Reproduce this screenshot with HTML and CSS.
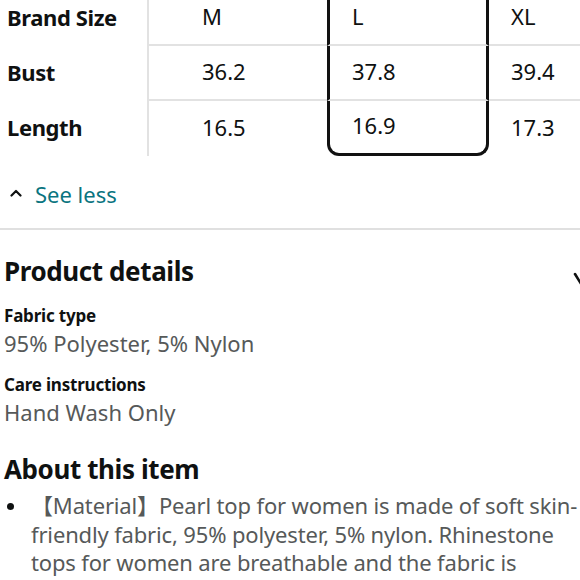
FILE: index.html
```html
<!DOCTYPE html>
<html lang="en">
<head>
<meta charset="utf-8">
<title>Size chart and product details</title>
<link rel="stylesheet" href="styles.css">
</head>
<body>
<div class="page">
  <div class="size-table">
    <div class="label">Brand Size</div>
    <div class="cell col-m line">M</div>
    <div class="cell sel line">L</div>
    <div class="cell col-xl line">XL</div>

    <div class="label">Bust</div>
    <div class="cell col-m line">36.2</div>
    <div class="cell sel line">37.8</div>
    <div class="cell col-xl line">39.4</div>

    <div class="label">Length</div>
    <div class="cell col-m">16.5</div>
    <div class="cell sel sel-last">16.9</div>
    <div class="cell col-xl">17.3</div>
  </div>

  <div class="see-less">
    <svg class="caret" width="12" height="8" viewBox="0 0 12 8" aria-hidden="true">
      <polyline points="1.5,6.5 6,2 10.5,6.5" fill="none" stroke="#0f1111" stroke-width="2.2" stroke-linecap="round" stroke-linejoin="round"/>
    </svg>
    <span class="link">See less</span>
  </div>

  <hr class="divider">

  <div class="section">
    <div class="section-head">
      <h2 class="heading">Product details</h2>
      <svg class="chev" width="20" height="18" viewBox="0 0 20 18" aria-hidden="true">
        <polyline points="2,2 10,15 18,2" fill="none" stroke="#0f1111" stroke-width="2.6" stroke-linecap="round" stroke-linejoin="round"/>
      </svg>
    </div>
    <div class="detail">
      <div class="detail-label">Fabric type</div>
      <div class="detail-value">95% Polyester, 5% Nylon</div>
    </div>
    <div class="detail">
      <div class="detail-label">Care instructions</div>
      <div class="detail-value">Hand Wash Only</div>
    </div>
  </div>

  <div class="section about">
    <h2 class="heading">About this item</h2>
    <ul class="bullets">
      <li><span class="bullet-text">【Material】Pearl top for women is made of soft skin-friendly fabric, 95% polyester, 5% nylon. Rhinestone tops for women are breathable and the fabric is lightweight, soft and comfortable to wear all day long.</span></li>
    </ul>
  </div>
</div>
</body>
</html>
```

FILE: styles.css
```css
html, body {
  margin: 0;
  padding: 0;
  background: #ffffff;
  overflow: hidden;
}

body {
  font-family: "Noto Sans", "Noto Sans CJK SC", sans-serif;
  color: #0f1111;
}

.page {
  width: 580px;
  height: 580px;
  overflow: hidden;
}

/* size table */
.size-table {
  display: grid;
  grid-template-columns: 149px 178px 162px 1fr;
  grid-auto-rows: 55px;
  margin-top: -9px;
  font-size: 22px;
}

.label {
  display: flex;
  align-items: center;
  padding: 0 0 4px 7px;
  font-weight: 700;
  letter-spacing: -0.4px;
  border-right: 2px solid #e2e2e2;
}

.cell {
  display: flex;
  align-items: center;
  padding-bottom: 4px;
}

.line {
  border-bottom: 2px solid #e2e2e2;
}

.col-m {
  padding-left: 53px;
}

.sel {
  padding-left: 22px;
  border-left: 3px solid #111111;
  border-right: 3px solid #111111;
}

.sel-last {
  border-bottom: 3px solid #111111;
  border-radius: 0 0 12px 12px;
}

.col-xl {
  padding-left: 22px;
}

/* see less */
.see-less {
  display: flex;
  align-items: center;
  gap: 13px;
  padding: 23px 0 19px 10px;
  line-height: 30px;
}

.caret {
  display: block;
  margin-top: -2px;
}

.link {
  font-size: 22px;
  color: #0a7480;
}

.divider {
  margin: 0;
  border: 0;
  height: 2px;
  background: #e0e0e0;
}

/* product details */
.section {
  padding-left: 4px;
}

.section-head {
  display: flex;
  justify-content: space-between;
  align-items: flex-start;
  height: 34px;
  margin-top: 24px;
}

.heading {
  margin: 0;
  font-size: 26px;
  line-height: 34px;
  font-weight: 700;
  letter-spacing: -0.4px;
}

.chev {
  display: block;
  flex: none;
  margin-right: -13px;
  margin-top: 18px;
}

.detail {
  margin-top: 16px;
}

.detail-label {
  font-size: 17px;
  line-height: 24px;
  font-weight: 700;
  letter-spacing: -0.2px;
}

.detail-value {
  margin-top: 1px;
  font-size: 22px;
  line-height: 28px;
  color: #565959;
}

.about {
  margin-top: 26px;
}

.bullets {
  margin: 5px -10px 0 0;
  padding: 0;
  list-style: none;
  font-size: 22px;
  line-height: 28.5px;
  color: #565959;
}

.bullets li {
  display: grid;
  grid-template-columns: 27px 1fr;
}

.bullets li::before {
  content: "";
  width: 7px;
  height: 7px;
  border-radius: 50%;
  background: #0f1111;
  margin: 12px 0 0 3px;
}

.bullet-text {
  letter-spacing: -0.15px;
}
```
